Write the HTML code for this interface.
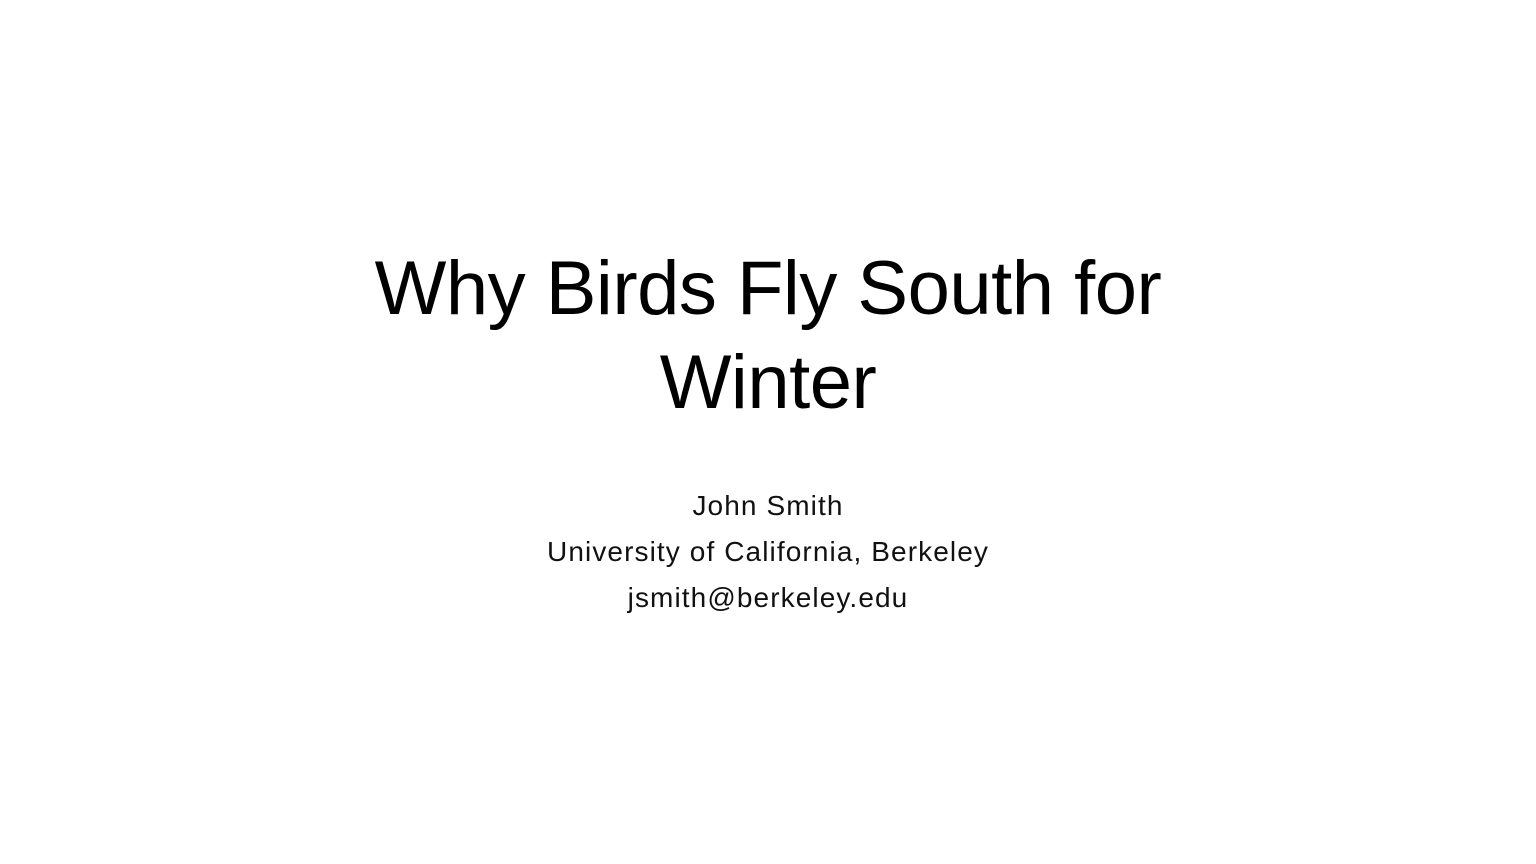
<!DOCTYPE html>
<html><head><meta charset="utf-8"><style>
html,body{margin:0;padding:0;background:#fff;width:1536px;height:864px;overflow:hidden}
body{font-family:"Liberation Sans",sans-serif;color:#000;position:relative}
.t{position:absolute;left:0;width:1536px;text-align:center;font-size:76px;line-height:94px;top:242px;letter-spacing:-0.5px}
.s{position:absolute;left:0;width:1536px;text-align:center;font-size:28px;line-height:46px;top:483px;color:#111;letter-spacing:1.1px}
</style></head><body>
<div class="t">Why Birds Fly South for<br>Winter</div>
<div class="s">John Smith<br>University of California, Berkeley<br>jsmith@berkeley.edu</div>
</body></html>
